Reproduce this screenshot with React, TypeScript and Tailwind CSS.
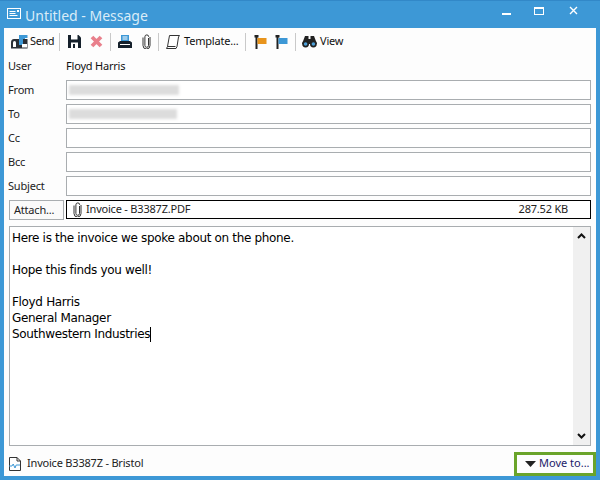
const tahoma = "font-['Noto_Sans',sans-serif] tracking-[-0.2px]";

function Separator({ className }: { className: string }) {
  return <div className={`w-px h-[18px] bg-[#c9c9c9] ${className}`} />;
}

function SendIcon() {
  return (
    <svg width="17" height="15" viewBox="0 0 17 15">
      <path d="M0 8.5Q0 5 3 5h7v9.5H0z" fill="#2a2f36" />
      <path d="M2 8.5Q2 7 3.5 7T5 8.5V13H2z" fill="#fff" />
      <rect x="10" y="5" width="6.5" height="9.5" fill="#2a2f36" />
      <path d="M8 1h6v4h-2v6H8z" fill="#3d98d6" />
      <path d="M14 1h2.5v3H14z" fill="#3d98d6" />
      <rect x="11" y="10" width="5" height="3.5" fill="#fff" />
    </svg>
  );
}

function SaveIcon() {
  return (
    <svg width="13" height="13" viewBox="0 0 13 13">
      <path d="M0 0h10.5L13 2.5V13H0z" fill="#15202b" />
      <rect x="3" y="0" width="6.5" height="4.5" fill="#fff" />
      <rect x="3" y="7.5" width="7" height="5.5" fill="#fff" />
      <rect x="5" y="9" width="2" height="4" fill="#15202b" />
    </svg>
  );
}

function DeleteIcon() {
  return (
    <svg width="13" height="13" viewBox="0 0 13 13">
      <path d="M2 2l9 9M11 2l-9 9" stroke="#e9808c" strokeWidth="3.8" />
    </svg>
  );
}

function PrintIcon() {
  return (
    <svg width="14" height="13" viewBox="0 0 14 13">
      <rect x="3" y="0" width="8" height="6" fill="#3d98d6" />
      <path d="M4.5 2h5M4.5 4h5" stroke="#fff" />
      <path d="M0 7.5L2 6h10l2 1.5V13H0z" fill="#15202b" />
      <rect x="2" y="9" width="10" height="1" fill="#fff" />
    </svg>
  );
}

function ClipIcon() {
  return (
    <svg width="9" height="15" viewBox="0 0 9 15">
      <path
        d="M6.5 4v7.5a1.8 1.8 0 0 1-3.6 0V2.8a1.9 1.9 0 0 1 3.8 0M1 3.5v8a3.5 3.5 0 0 0 7 0V3"
        stroke="#333"
        fill="none"
      />
    </svg>
  );
}

function TemplateIcon() {
  return (
    <svg width="14" height="14" viewBox="0 0 14 14">
      <path d="M3.5.5h10l-1 1.5-1.5 9.5-1 2H.5l1-2z" stroke="#333" fill="#fff" />
      <path d="M1.5 11.5h8" stroke="#333" />
    </svg>
  );
}

function FlagIcon({ color }: { color: string }) {
  return (
    <svg width="13" height="14" viewBox="0 0 13 14">
      <rect x="1.5" y="0" width="2" height="14" fill="#222" />
      <rect x="0.5" y="0" width="4" height="2.5" fill="#222" />
      <rect x="3.5" y="3" width="9" height="6" fill={color} />
    </svg>
  );
}

function BinocularIcon() {
  return (
    <svg width="15" height="12" viewBox="0 0 15 12">
      <path d="M3 0h3.5v3h2V0H12l3 8H0z" fill="#222" />
      <circle cx="3.6" cy="8" r="3.4" fill="#222" />
      <circle cx="11.4" cy="8" r="3.4" fill="#222" />
      <circle cx="3.6" cy="8" r="1.8" fill="#4b9fd8" />
      <circle cx="11.4" cy="8" r="1.8" fill="#4b9fd8" />
    </svg>
  );
}

function DocIcon() {
  return (
    <svg width="12" height="14" viewBox="0 0 12 14">
      <path d="M.5.5h7.5l3.5 3.5v9.5H.5zM8 .5V4h3.5" stroke="#333" fill="#fff" />
      <path d="M0 9h3l1.2-2L6 11l1.2-3H11" stroke="#3d98d6" fill="none" />
    </svg>
  );
}

function Field({ label, blurWidth }: { label: string; blurWidth?: string }) {
  return (
    <div className="flex items-center h-5 mb-1">
      <span className="w-[57px] -ml-px mr-px text-[11px] text-[#222]">{label}</span>
      <div className="flex-1 h-5 border border-[#a9adb0] bg-white flex items-center pl-[2px]">
        {blurWidth && (
          <div className={`${blurWidth} h-[10px] bg-[#dcdcdc] blur-[1.5px]`} />
        )}
      </div>
    </div>
  );
}

export default function App() {
  return (
    <div className={`w-[600px] h-[480px] flex flex-col overflow-hidden bg-[#3d98d6] ${tahoma}`}>
      {/* title bar */}
      <div className="h-[28px] shrink-0 flex items-center pl-[7px] border-t border-[#3288c8]">
        <svg width="14" height="11" viewBox="0 0 14 11" className="mt-[-2px]">
          <rect x=".5" y=".5" width="13" height="10" fill="none" stroke="#fff" />
          <path d="M2.5 3.5h6M2.5 5.5h6M2.5 7.5h8" stroke="#fff" />
          <rect x="10" y="2" width="2" height="2" fill="#fff" />
        </svg>
        <span className="ml-[4px] mt-[3px] text-[14px] leading-none tracking-normal text-[#d9ecf8]">Untitled - Message</span>
        <div className="ml-auto flex items-center mb-[8px]">
          <div className="w-[9px] h-[2px] bg-white mt-[7px] mr-[23px]" />
          <div className="w-[10px] h-[8px] border border-t-2 border-white mr-[25px]" />
          <svg width="9" height="9" viewBox="0 0 9 9" className="mr-[22px]">
            <path d="M1 1l7 7M8 1 1 8" stroke="#fff" strokeWidth="1.4" />
          </svg>
        </div>
      </div>

      {/* body */}
      <div className="flex-1 mx-[4px] mb-[4px] bg-[#fdfdfd] flex flex-col min-h-0">
        {/* toolbar */}
        <div className="h-[27px] shrink-0 flex items-center pl-[7px] text-[11px] text-[#111]">
          <SendIcon />
          <span className="ml-[2px] w-[23px] tracking-[-0.4px]">Send</span>
          <Separator className="ml-[6px] mr-[8px]" />
          <SaveIcon />
          <div className="w-[9px]" />
          <DeleteIcon />
          <Separator className="ml-[7px] mr-[7px]" />
          <PrintIcon />
          <div className="w-[10px]" />
          <ClipIcon />
          <Separator className="ml-[7px] mr-[7px]" />
          <TemplateIcon />
          <span className="ml-[4px] w-[55px] whitespace-nowrap">Template...</span>
          <Separator className="ml-[6px] mr-[8px]" />
          <FlagIcon color="#e8941c" />
          <div className="w-[8px]" />
          <FlagIcon color="#3d98d6" />
          <Separator className="ml-[7px] mr-[6px]" />
          <BinocularIcon />
          <span className="ml-[3px]">View</span>
        </div>

        {/* fields */}
        <div className="flex flex-col flex-1 min-h-0 pl-[5px] pr-[5px]">
          <div className="flex items-center h-[21px] mb-[4px] pt-[2px] text-[11px] text-[#222]">
            <span className="w-[57px] -ml-px mr-px">User</span>
            <span className="text-[#111]">Floyd Harris</span>
          </div>
          <Field label="From" blurWidth="w-[110px]" />
          <Field label="To" blurWidth="w-[108px]" />
          <Field label="Cc" />
          <Field label="Bcc" />
          <Field label="Subject" />

          <div className="flex h-5 mb-[6px]">
            <div className="w-[55px] mr-[2px] h-5 border border-[#a9adb0] bg-[#fafafa] flex items-center pl-[4px] text-[11px] text-[#222]">
              Attach...
            </div>
            <div className="flex-1 h-[19px] border border-black bg-white flex items-center text-[11px] text-[#222] pl-[6px] pr-[22px]">
              <ClipIcon />
              <span className="ml-[4px]">Invoice - B3387Z.PDF</span>
              <span className="ml-auto">287.52 KB</span>
            </div>
          </div>

          {/* message */}
          <div className="h-[220px] shrink-0 border border-[#a9adb0] bg-white flex">
            <div className="flex-1 pl-[2px] pt-[3px] text-[12px] leading-[16px] tracking-[-0.33px] text-black font-['DejaVu_Sans',sans-serif]">
              <p>Here is the invoice we spoke about on the phone.</p>
              <p>&nbsp;</p>
              <p>Hope this finds you well!</p>
              <p>&nbsp;</p>
              <p>Floyd Harris</p>
              <p>General Manager</p>
              <p>
                Southwestern Industries
                <span className="inline-block w-px h-[15px] bg-black align-middle" />
              </p>
            </div>
            <div className="w-[17px] bg-[#f0f0f0] flex flex-col items-center justify-between py-[6px]">
              <svg width="9" height="6" viewBox="0 0 9 6">
                <path d="M1 5l3.5-3.5L8 5" stroke="#111" strokeWidth="2" fill="none" />
              </svg>
              <svg width="9" height="6" viewBox="0 0 9 6">
                <path d="M1 1l3.5 3.5L8 1" stroke="#111" strokeWidth="2" fill="none" />
              </svg>
            </div>
          </div>

          {/* status row */}
          <div className="flex-1 flex items-center text-[11px] text-[#222] -mr-[5px] pt-[5px]">
            <DocIcon />
            <span className="ml-[6px]">Invoice B3387Z - Bristol</span>
            <div className="ml-auto w-[82px] h-[24px] border-[3px] border-[#6aa42a] bg-[#fdfdfd] flex items-center pl-[8px] text-[#1b1b6b] tracking-normal">
              <svg width="11" height="6" viewBox="0 0 11 6" className="mr-[3px]">
                <path d="M0 0h11L5.5 6z" fill="#222" />
              </svg>
              Move to...
            </div>
          </div>
        </div>
      </div>
    </div>
  );
}
